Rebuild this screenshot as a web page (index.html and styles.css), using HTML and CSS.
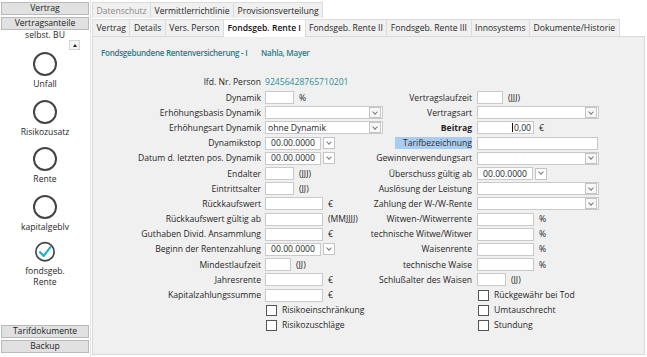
FILE: index.html
```html
<!DOCTYPE html>
<html lang="de">
<head>
    <meta charset="UTF-8">
    <title>Fondsgeb. Rente I</title>
    <link rel="stylesheet" href="styles.css">
</head>
<body>
<div class="app">

    <div class="sidebar">
        <div class="side-btn">Vertrag</div>
        <div class="side-btn">Vertragsanteile</div>
        <div class="side-sub">selbst. BU</div>
        <div class="scroll-up"><span class="tri"></span></div>

        <div class="module"><span class="ring"></span><span class="mod-name">Unfall</span></div>
        <div class="module"><span class="ring"></span><span class="mod-name">Risikozusatz</span></div>
        <div class="module"><span class="ring"></span><span class="mod-name">Rente</span></div>
        <div class="module"><span class="ring"></span><span class="mod-name">kapitalgeblv</span></div>
        <div class="module">
            <svg class="ring-svg" width="26" height="26" viewBox="0 0 26 26">
                <circle cx="13" cy="13" r="11" fill="none" stroke="#444" stroke-width="2"/>
                <path d="M7 13.5 L11.5 18 L19.5 7.5" fill="none" stroke="#19b3c6" stroke-width="2.6" stroke-linecap="round" stroke-linejoin="round"/>
            </svg>
            <span class="mod-name">fondsgeb.<br>Rente</span>
        </div>

        <div class="side-bottom">
            <div class="side-btn">Tarifdokumente</div>
            <div class="side-btn">Backup</div>
        </div>
    </div>

    <div class="main">
        <div class="tabs tabs-top">
            <div class="tab disabled">Datenschutz</div>
            <div class="tab">Vermittlerrichtlinie</div>
            <div class="tab">Provisionsverteilung</div>
        </div>
        <div class="tabs">
            <div class="tab">Vertrag</div>
            <div class="tab">Details</div>
            <div class="tab">Vers. Person</div>
            <div class="tab active">Fondsgeb. Rente I</div>
            <div class="tab">Fondsgeb. Rente II</div>
            <div class="tab">Fondsgeb. Rente III</div>
            <div class="tab">Innosystems</div>
            <div class="tab">Dokumente/Historie</div>
        </div>

        <div class="panel">
            <div class="heading">
                <span class="heading-title">Fondsgebundene Rentenversicherung - I</span>
                <span>Nahla, Mayer</span>
            </div>

            <div class="form">
                <div class="row first">
                    <span class="lbl">lfd. Nr. Person</span>
                    <span class="value">92456428765710201</span>
                    <span></span><span></span>
                </div>

                <div class="row">
                    <span class="lbl">Dynamik</span>
                    <span class="field"><span class="box w27"></span><span class="unit">%</span></span>
                    <span class="lbl">Vertragslaufzeit</span>
                    <span class="field"><span class="box w24"></span><span class="unit">(JJJ)</span></span>
                </div>

                <div class="row">
                    <span class="lbl">Erhöhungsbasis Dynamik</span>
                    <span class="field"><span class="box w118 select"><span class="arrow"></span></span></span>
                    <span class="lbl">Vertragsart</span>
                    <span class="field"><span class="box w120 select"><span class="arrow"></span></span></span>
                </div>

                <div class="row">
                    <span class="lbl">Erhöhungsart Dynamik</span>
                    <span class="field"><span class="box w118 select">ohne Dynamik<span class="arrow"></span></span></span>
                    <span class="lbl bold">Beitrag</span>
                    <span class="field"><span class="box w55 num"><span class="caret"></span>0,00</span><span class="unit">€</span></span>
                </div>

                <div class="row">
                    <span class="lbl">Dynamikstop</span>
                    <span class="field"><span class="box w54 date">00.00.0000</span><span class="drop"></span></span>
                    <span class="lbl marked">Tarifbezeichnung</span>
                    <span class="field"><span class="box w119"></span></span>
                </div>

                <div class="row">
                    <span class="lbl">Datum d. letzten pos. Dynamik</span>
                    <span class="field"><span class="box w54 date">00.00.0000</span><span class="drop"></span></span>
                    <span class="lbl">Gewinnverwendungsart</span>
                    <span class="field"><span class="box w120 select"><span class="arrow"></span></span></span>
                </div>

                <div class="row">
                    <span class="lbl">Endalter</span>
                    <span class="field"><span class="box w27"></span><span class="unit">(JJJ)</span></span>
                    <span class="lbl">Überschuss gültig ab</span>
                    <span class="field"><span class="box w54 date">00.00.0000</span><span class="drop"></span></span>
                </div>

                <div class="row">
                    <span class="lbl">Eintrittsalter</span>
                    <span class="field"><span class="box w27"></span><span class="unit">(JJ)</span></span>
                    <span class="lbl">Auslösung der Leistung</span>
                    <span class="field"><span class="box w120 select"><span class="arrow"></span></span></span>
                </div>

                <div class="row">
                    <span class="lbl">Rückkaufswert</span>
                    <span class="field"><span class="box w56"></span><span class="unit">€</span></span>
                    <span class="lbl">Zahlung der W-/W-Rente</span>
                    <span class="field"><span class="box w120 select"><span class="arrow"></span></span></span>
                </div>

                <div class="row">
                    <span class="lbl">Rückkaufswert gültig ab</span>
                    <span class="field"><span class="box w56"></span><span class="unit">(MMJJJJ)</span></span>
                    <span class="lbl">Witwen-/Witwerrente</span>
                    <span class="field"><span class="box w55"></span><span class="unit">%</span></span>
                </div>

                <div class="row">
                    <span class="lbl">Guthaben Divid. Ansammlung</span>
                    <span class="field"><span class="box w56"></span><span class="unit">€</span></span>
                    <span class="lbl">technische Witwe/Witwer</span>
                    <span class="field"><span class="box w55"></span><span class="unit">%</span></span>
                </div>

                <div class="row">
                    <span class="lbl">Beginn der Rentenzahlung</span>
                    <span class="field"><span class="box w54 date">00.00.0000</span><span class="drop"></span></span>
                    <span class="lbl">Waisenrente</span>
                    <span class="field"><span class="box w55"></span><span class="unit">%</span></span>
                </div>

                <div class="row">
                    <span class="lbl">Mindestlaufzeit</span>
                    <span class="field"><span class="box w24"></span><span class="unit">(JJ)</span></span>
                    <span class="lbl">technische Waise</span>
                    <span class="field"><span class="box w55"></span><span class="unit">%</span></span>
                </div>

                <div class="row">
                    <span class="lbl">Jahresrente</span>
                    <span class="field"><span class="box w56"></span><span class="unit">€</span></span>
                    <span class="lbl">Schlußalter des Waisen</span>
                    <span class="field"><span class="box w27"></span><span class="unit">(JJ)</span></span>
                </div>

                <div class="row">
                    <span class="lbl">Kapitalzahlungssumme</span>
                    <span class="field"><span class="box w56"></span><span class="unit">€</span></span>
                    <span></span>
                    <span class="field"><span class="check"></span>Rückgewähr bei Tod</span>
                </div>

                <div class="row">
                    <span></span>
                    <span class="field"><span class="check"></span>Risikoeinschränkung</span>
                    <span></span>
                    <span class="field"><span class="check"></span>Umtauschrecht</span>
                </div>

                <div class="row">
                    <span></span>
                    <span class="field"><span class="check"></span>Risikozuschläge</span>
                    <span></span>
                    <span class="field"><span class="check"></span>Stundung</span>
                </div>
            </div>
        </div>
    </div>

</div>
</body>
</html>
```

FILE: styles.css
```css
body {
    margin: 0;
    background-color: #ffffff;
    font-family: "Open Sans", "Noto Sans", sans-serif;
    font-size: 8.6px;
    color: #262626;
}

.app {
    display: flex;
    height: 357px;
}

/* left column */

.sidebar {
    width: 91px;
    display: flex;
    flex-direction: column;
    align-items: center;
    padding-top: 2px;
    box-sizing: border-box;
    border-right: 1px solid #e3e3e3;
}

.side-btn {
    width: 86px;
    height: 11px;
    line-height: 11px;
    margin-bottom: 2px;
    text-align: center;
    background-color: #e1e1e1;
    border: 1px solid #b9b9b9;
    box-sizing: content-box;
    color: #222;
}

.side-sub {
    line-height: 9px;
    margin-top: -1px;
}

.scroll-up {
    align-self: flex-end;
    margin-right: 10px;
    width: 9px;
    height: 8px;
    border: 1px solid #d4d4d4;
    background-color: #f4f4f4;
    display: flex;
    align-items: center;
    justify-content: center;
}

.tri {
    width: 0;
    height: 0;
    border-left: 2.5px solid transparent;
    border-right: 2.5px solid transparent;
    border-bottom: 3px solid #222;
}

.module {
    display: flex;
    flex-direction: column;
    align-items: center;
    height: 47.5px;
}

.ring {
    width: 20px;
    height: 20px;
    border: 2px solid #444;
    border-radius: 50%;
    margin-top: 2px;
}

.ring-svg {
    margin-top: 1px;
}

.mod-name {
    margin-top: 3px;
    line-height: 11px;
    text-align: center;
}

.side-bottom {
    margin-top: auto;
    padding-bottom: 2px;
}

/* tabs */

.main {
    flex: 1;
    display: flex;
    flex-direction: column;
    padding: 2px 2px 2px 1px;
}

.tabs {
    display: flex;
    height: 17px;
}

.tabs-top {
    height: 16px;
    margin-bottom: 1px;
}

.tab {
    padding: 0 3.5px;
    line-height: 16px;
    background-color: #f0f0f0;
    border: 1px solid #dcdcdc;
    border-bottom: none;
    margin-right: -1px;
    color: #262626;
    white-space: nowrap;
}

.tab.disabled {
    color: #8a8a8a;
}

.tab.active {
    background-color: #ffffff;
    font-weight: 600;
    color: #111;
    position: relative;
    z-index: 1;
    margin-bottom: -1px;
}

/* content panel */

.panel {
    flex: 1;
    background-color: #f0f0f0;
    border: 1px solid #d9d9d9;
    padding: 9px 0 0 8px;
}

.heading {
    display: flex;
    color: #1d7f86;
    font-weight: 600;
    font-size: 8px;
    letter-spacing: -0.25px;
    height: 14px;
    line-height: 14px;
    white-space: nowrap;
}

.heading-title {
    width: 160px;
}

.form {
    margin-top: 13px;
}

.row {
    display: grid;
    grid-template-columns: 164px 118px 94px 1fr;
    height: 15.2px;
    align-items: center;
}

.row.first {
    height: 17px;
}

.lbl {
    justify-self: end;
    margin-right: 4px;
    white-space: nowrap;
}

.row .lbl:nth-child(3) {
    margin-right: 5px;
}

.lbl.bold {
    font-weight: 700;
}

.lbl.marked {
    background-color: #a9cdf0;
    padding: 0 0 0 8px;
    color: #333;
}

.value {
    color: #2b8f97;
}

.field {
    display: flex;
    align-items: center;
    white-space: nowrap;
}

.box {
    height: 11px;
    background-color: #ffffff;
    border: 1px solid #c9c9c9;
    display: flex;
    align-items: center;
    padding: 0 2px;
    box-sizing: content-box;
    position: relative;
}

.w24 { width: 20px; }
.w27 { width: 23px; }
.w54 { width: 50px; }
.w55 { width: 51px; }
.w56 { width: 52px; }
.w118 { width: 114px; }
.w119 { width: 115px; }
.w120 { width: 116px; }

.box.date {
    justify-content: center;
}

.box.num {
    justify-content: flex-end;
}

.caret {
    width: 1px;
    height: 9px;
    background-color: #111;
    position: absolute;
    right: 20px;
}

.arrow,
.drop {
    width: 10px;
    height: 9px;
    border: 1px solid #c4c4c4;
    background-color: #f7f7f7;
    position: relative;
}

.arrow {
    position: absolute;
    right: 1px;
    top: 0;
}

.drop {
    margin-left: 2px;
    height: 10px;
    background-color: #ffffff;
}

.arrow::after,
.drop::after {
    content: "";
    position: absolute;
    left: 3px;
    top: 1.5px;
    width: 3px;
    height: 3px;
    border-right: 1px solid #7a7a7a;
    border-bottom: 1px solid #7a7a7a;
    transform: rotate(45deg);
}

.unit {
    margin-left: 5px;
}

.check {
    width: 9px;
    height: 9px;
    border: 1px solid #555;
    background-color: #ffffff;
    margin: 0 5px 0 1px;
}
```
